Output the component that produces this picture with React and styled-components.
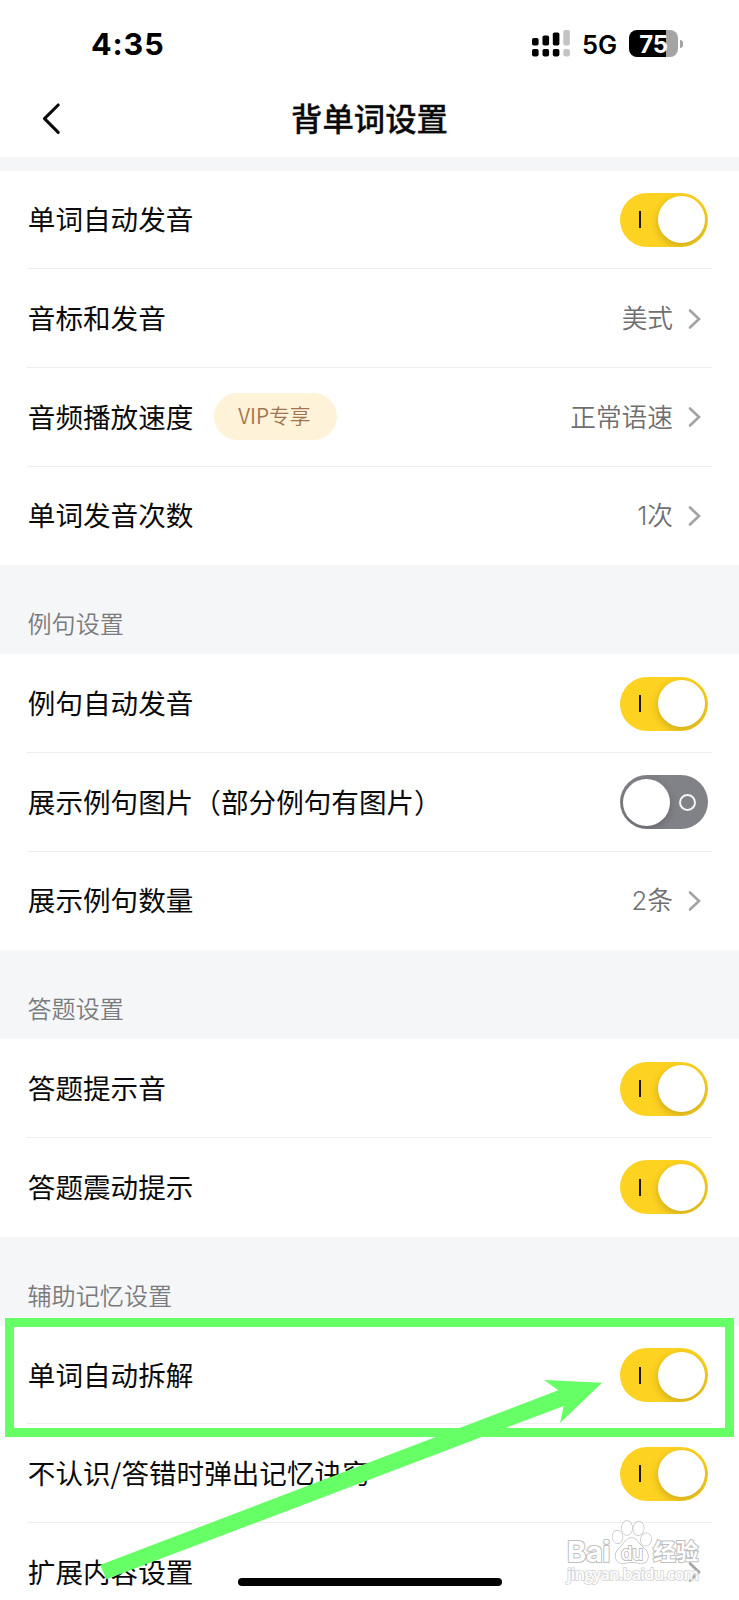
import React, { useState } from 'react';
import styled, { createGlobalStyle } from 'styled-components';

// --- Color Palette ---
const colors = {
  text: '#0b0b0b',
  muted: '#6f6f71',
  heading: '#7a7b7e',
  pageGray: '#f5f6f8',
  divider: '#eeeef0',
  yellow: '#fdd221',
  switchOff: '#818188',
  chevron: '#a3a3a5',
  vipBackground: '#fef2d8',
  vipText: '#a37450',
  marker: '#66ff66',
};

const GlobalStyle = createGlobalStyle`
  * {
    box-sizing: border-box;
  }
  body {
    margin: 0;
    background: #fff;
    overflow: hidden;
  }
`;

// --- Page ---
const Screen = styled.div`
  position: relative;
  width: 739px;
  height: 1600px;
  overflow: hidden;
  background: #fff;
  color: ${colors.text};
  font-family: 'Noto Sans CJK SC', 'Noto Sans', sans-serif;
`;

// --- Status bar ---
const StatusBar = styled.div`
  display: flex;
  align-items: center;
  justify-content: space-between;
  height: 87px;
  padding: 0 56px 0 91px;
  font-family: Inter, 'Liberation Sans', sans-serif;
`;

const Clock = styled.span`
  font-size: 30.5px;
  font-weight: 700;
  line-height: 36px;
  letter-spacing: 0.9px;
  color: #000;
`;

const StatusIcons = styled.div`
  display: flex;
  align-items: center;
`;

const Network = styled.span`
  margin-left: 12px;
  font-size: 25.5px;
  font-weight: 600;
  line-height: 28px;
  letter-spacing: -0.1px;
  padding-top: 3px;
  color: #000;
`;

const Battery = styled.div`
  display: flex;
  align-items: center;
  justify-content: center;
  width: 49px;
  height: 27px;
  margin-left: 12px;
  padding-top: 1px;
  border-radius: 8px;
  background: linear-gradient(to right, #000 37px, #a4a4a4 37px);
  color: #fff;
  font-size: 24px;
  font-weight: 700;
  letter-spacing: -0.3px;
`;

const BatteryTip = styled.span`
  width: 3px;
  height: 8px;
  margin-left: 2px;
  border-radius: 0 4px 4px 0;
  background: #a4a4a4;
`;

// --- Title bar ---
const TitleBar = styled.header`
  display: grid;
  grid-template-columns: 100px 1fr 100px;
  align-items: center;
  height: 70px;
  padding-bottom: 8px;
`;

const BackButton = styled.button`
  display: flex;
  margin-left: 39px;
  padding: 0;
  border: none;
  background: none;
`;

const Title = styled.h1`
  margin: 0 0 1px;
  text-align: center;
  font-size: 31.4px;
  font-weight: 500;
  line-height: 44px;
  -webkit-text-stroke: 0.3px ${colors.text};
`;

// --- Settings list ---
const Spacer = styled.div`
  height: 13.5px;
  background: ${colors.pageGray};
`;

const SectionHeading = styled.h2`
  display: flex;
  align-items: flex-end;
  height: 89px;
  margin: 0;
  padding: 0 27.5px 13px;
  background: ${colors.pageGray};
  color: ${colors.heading};
  font-size: 24.1px;
  font-weight: 350;
  line-height: 36px;
`;

const List = styled.div`
  padding: 0 27px;
`;

const Row = styled.div`
  display: flex;
  align-items: center;
  height: 98.7px;
  padding: 1px 4px 0 0.8px;
  border-bottom: 1px solid ${colors.divider};

  &:last-child {
    border-bottom-color: transparent;
  }
`;

const Label = styled.span`
  margin-bottom: 3px;
  font-size: 27.6px;
  line-height: 40px;
  white-space: nowrap;
`;

const VipBadge = styled.span`
  display: flex;
  align-items: center;
  justify-content: center;
  width: 123px;
  height: 47px;
  margin: 0 0 1.5px 20.5px;
  padding: 0 2px 2px 0;
  border-radius: 24px;
  background: ${colors.vipBackground};
  color: ${colors.vipText};
  font-size: 20.8px;
  font-weight: 350;
`;

const RowEnd = styled.div`
  display: flex;
  align-items: center;
  margin-left: auto;
`;

const Value = styled.span`
  padding-top: 1px;
  color: ${colors.muted};
  font-family: Inter, 'Noto Sans CJK SC', sans-serif;
  font-size: 25.7px;
  font-weight: 350;
  line-height: 38px;
`;

const Chevron = styled.svg`
  margin: 0 6px 0 14px;
`;

const SwitchTrack = styled.button`
  display: flex;
  align-items: center;
  flex-direction: ${({ $on }) => ($on ? 'row' : 'row-reverse')};
  justify-content: space-between;
  width: 88px;
  height: 54px;
  padding: ${({ $on }) => ($on ? '0 3px 0 19px' : '0 12px 0 3px')};
  border: none;
  border-radius: 27px;
  overflow: hidden;
  background: ${({ $on }) => ($on ? colors.yellow : colors.switchOff)};
`;

const SwitchKnob = styled.span`
  width: 47px;
  height: 47px;
  border-radius: 50%;
  background: #fff;
  box-shadow: 0 3px 8px rgba(0, 0, 0, 0.2);
`;

const OnMark = styled.span`
  width: 2px;
  height: 17px;
  background: #1b1500;
`;

const OffMark = styled.span`
  width: 17px;
  height: 17px;
  border: 2px solid #f4f4f5;
  border-radius: 50%;
`;

// --- Overlays ---
const HomeIndicator = styled.div`
  position: absolute;
  left: 237.5px;
  top: 1577.5px;
  width: 264.5px;
  height: 8.5px;
  border-radius: 5px;
  background: #000;
`;

const MarkerBox = styled.div`
  position: absolute;
  left: 5px;
  top: 1318px;
  width: 729px;
  height: 119px;
  border: 9px solid ${colors.marker};
`;

const MarkerArrow = styled.svg`
  position: absolute;
  left: 90px;
  top: 1370px;
`;

const Watermark = styled.div`
  position: absolute;
  left: 567px;
  top: 1519px;
  width: 136px;
  color: #fff;
  opacity: 0.85;
  font-family: 'Open Sans', 'Noto Sans', 'Noto Sans CJK SC', sans-serif;
  -webkit-text-stroke: 2px #b4b4b4;
  paint-order: stroke fill;
  white-space: nowrap;
`;

const WatermarkBrand = styled.div`
  display: flex;
  align-items: flex-end;
  height: 46px;
`;

const Brand = styled.span`
  width: 45px;
  font-family: Inter, sans-serif;
  font-size: 29px;
  font-weight: 700;
  letter-spacing: -0.2px;
  line-height: 27px;
`;

const BrandCn = styled.span`
  margin-left: 1px;
  font-family: 'Noto Sans CJK SC', sans-serif;
  font-size: 22.8px;
  font-weight: 700;
  line-height: 28px;
`;

const Site = styled.div`
  margin-top: -1px;
  font-size: 16.2px;
  font-weight: 600;
  line-height: 20px;
  letter-spacing: -0.7px;
  -webkit-text-stroke: 1.6px #cbcbcb;
`;

const sections = [
  {
    rows: [
      { label: '单词自动发音', on: true },
      { label: '音标和发音', value: '美式' },
      { label: '音频播放速度', value: '正常语速', vip: true },
      { label: '单词发音次数', value: '1次' },
    ],
  },
  {
    title: '例句设置',
    rows: [
      { label: '例句自动发音', on: true },
      { label: '展示例句图片（部分例句有图片）', on: false },
      { label: '展示例句数量', value: '2条' },
    ],
  },
  {
    title: '答题设置',
    rows: [
      { label: '答题提示音', on: true },
      { label: '答题震动提示', on: true },
    ],
  },
  {
    title: '辅助记忆设置',
    rows: [
      { label: '单词自动拆解', on: true },
      { label: '不认识/答错时弹出记忆诀窍', on: true },
      { label: '扩展内容设置', value: '' },
    ],
  },
];

// x, top of the upper bar, color
const signalBars = [
  [0, 8, '#000'],
  [10.5, 5.5, '#000'],
  [20.8, 2.5, '#000'],
  [31.3, 0, '#c4c4c4'],
];

const Signal = () => (
  <svg width="38" height="27" viewBox="0 0 38 27">
    {signalBars.map(([x, top, fill]) => (
      <g key={x} fill={fill}>
        <rect x={x} y={top} width="6.6" height={15.5 - top} rx="1.8" />
        <rect x={x} y="19" width="6.6" height="7.4" rx="1.8" />
      </g>
    ))}
  </svg>
);

const Switch = ({ initial }) => {
  const [on, setOn] = useState(initial);

  return (
    <SwitchTrack type="button" role="switch" aria-checked={on} $on={on} onClick={() => setOn(!on)}>
      {on ? <OnMark /> : <OffMark />}
      <SwitchKnob />
    </SwitchTrack>
  );
};

const SettingRow = ({ row }) => (
  <Row>
    <Label>{row.label}</Label>
    {row.vip && <VipBadge>VIP专享</VipBadge>}
    <RowEnd>
      {row.on !== undefined ? (
        <Switch initial={row.on} />
      ) : (
        <>
          <Value>{row.value}</Value>
          <Chevron width="15" height="22" viewBox="0 0 15 22" fill="none">
            <path d="M3 2.5L12 11L3 19.5" stroke={colors.chevron} strokeWidth="2.6" strokeLinecap="round" />
          </Chevron>
        </>
      )}
    </RowEnd>
  </Row>
);

const Paw = () => (
  <svg width="40" height="46" viewBox="0 0 40 46" fill="#fff" stroke="#b4b4b4" strokeWidth="1.3">
    <ellipse cx="5.5" cy="18" rx="5" ry="6.3" transform="rotate(-8 5.5 18)" />
    <ellipse cx="15" cy="9" rx="5.2" ry="7" />
    <ellipse cx="26.5" cy="9.5" rx="5.2" ry="6.8" transform="rotate(8 26.5 9.5)" />
    <ellipse cx="34" cy="20.5" rx="5.2" ry="6.3" transform="rotate(10 34 20.5)" />
    <path d="M19.5 19C14 19 12 25 7.5 29C2 33.5 2 43 9.5 44C13.5 44.5 16 43 20 43C24 43 27 44.7 31 44C38 42.5 37 33.5 32 29.5C27 25.5 25 19 19.5 19Z" />
    <text
      x="9"
      y="40.5"
      fontFamily="Inter, sans-serif"
      fontSize="18.5"
      fontWeight="500"
      stroke="#b4b4b4"
      strokeWidth="1.8"
      letterSpacing="-0.5"
    >
      du
    </text>
  </svg>
);

const App = () => {
  return (
    <>
      <GlobalStyle />
      <Screen>
        <StatusBar>
          <Clock>4:35</Clock>
          <StatusIcons>
            <Signal />
            <Network>5G</Network>
            <Battery>75</Battery>
            <BatteryTip />
          </StatusIcons>
        </StatusBar>

        <TitleBar>
          <BackButton type="button" aria-label="返回">
            <svg width="24" height="34" viewBox="0 0 24 34" fill="none">
              <path
                d="M19.2 4L5.5 17.7L19.2 31.4"
                stroke="#0b0b0b"
                strokeWidth="3.1"
                strokeLinecap="round"
                strokeLinejoin="round"
              />
            </svg>
          </BackButton>
          <Title>背单词设置</Title>
        </TitleBar>

        <Spacer />

        {sections.map((section, index) => (
          <section key={index}>
            {section.title && <SectionHeading>{section.title}</SectionHeading>}
            <List>
              {section.rows.map((row) => (
                <SettingRow key={row.label} row={row} />
              ))}
            </List>
          </section>
        ))}

        <HomeIndicator />
        <MarkerBox />
        <MarkerArrow width="520" height="220" viewBox="90 1370 520 220">
          <polygon
            points="100,1565 558.3,1390.3 544,1380 602,1382.7 560,1423 563.7,1406 106.5,1579.3"
            fill={colors.marker}
          />
        </MarkerArrow>

        <Watermark>
          <WatermarkBrand>
            <Brand>Bai</Brand>
            <Paw />
            <BrandCn>经验</BrandCn>
          </WatermarkBrand>
          <Site>jingyan.baidu.com</Site>
        </Watermark>
      </Screen>
    </>
  );
};

export default App;
